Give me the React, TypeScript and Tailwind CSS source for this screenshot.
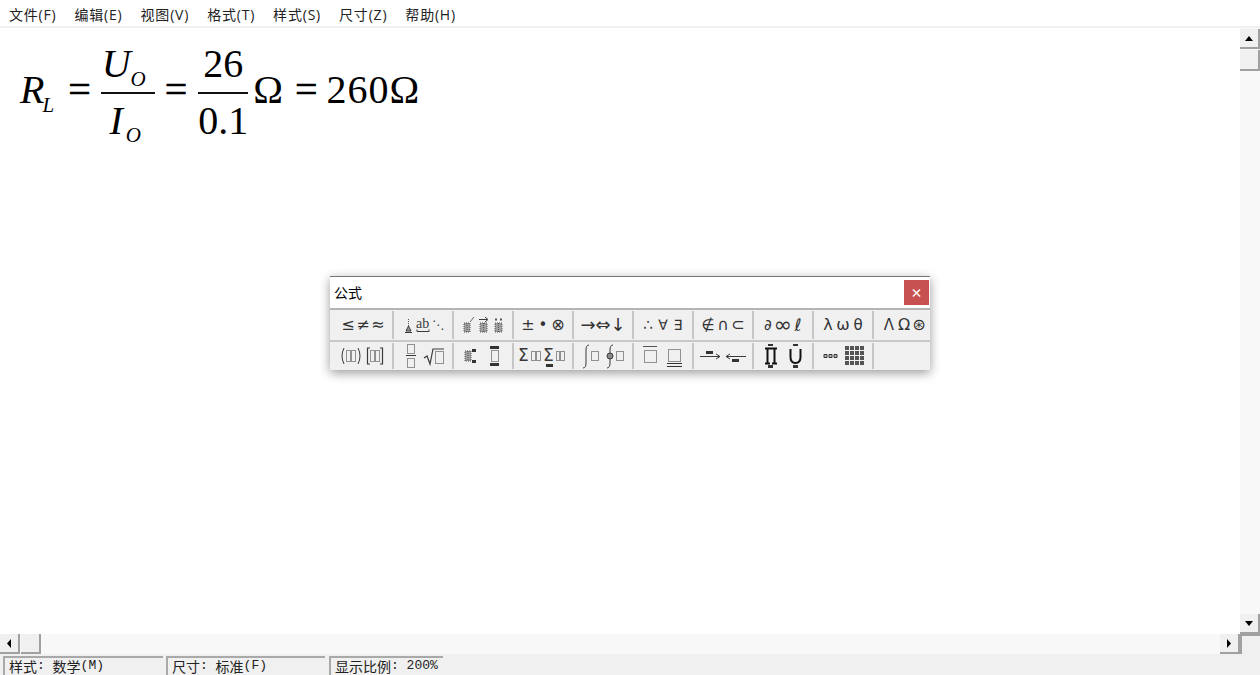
import type { ReactNode } from "react";

const ink = "#3a3a3a";

const menus = ["文件(F)", "编辑(E)", "视图(V)", "格式(T)", "样式(S)", "尺寸(Z)", "帮助(H)"];

// dotted template slot
function Slot({ x, y, w, h }: { x: number; y: number; w: number; h: number }) {
  return (
    <rect x={x + 0.5} y={y + 0.5} width={w} height={h} fill="none" stroke="#333" strokeWidth="1" strokeDasharray="1 1" />
  );
}

function Dense({ x, y, w, h }: { x: number; y: number; w: number; h: number }) {
  return (
    <g>
      <rect x={x} y={y} width={w} height={h} fill="#a0a0a0" />
      <rect x={x} y={y} width={w} height={h} fill="none" stroke="#555" strokeWidth="1" strokeDasharray="1 1" />
      <line x1={x + w / 2} y1={y} x2={x + w / 2} y2={y + h} stroke="#555" strokeWidth="1" strokeDasharray="1 1" />
    </g>
  );
}

function Small({ children }: { children: ReactNode }) {
  return (
    <svg width="15" height="22" viewBox="0 0 15 22" className="shrink-0">
      {children}
    </svg>
  );
}

function Wide({ children }: { children: ReactNode }) {
  return (
    <svg width="24" height="26" viewBox="0 0 24 26" className="shrink-0">
      {children}
    </svg>
  );
}

function Glyph({ children, size = "text-[16px]" }: { children: string; size?: string }) {
  return (
    <span className={`flex h-[22px] w-[15px] shrink-0 items-center justify-center font-['DejaVu_Sans',sans-serif] leading-none text-[#333] ${size}`}>
      {children}
    </span>
  );
}

const topRow: ReactNode[][] = [
  [<Glyph>≤</Glyph>, <Glyph>≠</Glyph>, <Glyph>≈</Glyph>],
  [
    <Small>
      <line x1="7.5" y1="5" x2="7.5" y2="12" stroke="#555" strokeDasharray="1 1" />
      <path d="M5 17 L7.5 12 L10 17 Z" fill="#999" stroke={ink} />
      <line x1="4" y1="18.5" x2="11" y2="18.5" stroke={ink} />
    </Small>,
    <Small>
      <text x="0" y="14" fontFamily="Liberation Serif" fontSize="14" fill={ink}>ab</text>
      <path d="M1 15.5 V17.5 H13 V15.5" fill="none" stroke={ink} />
    </Small>,
    <Glyph size="text-[12px]">⋱</Glyph>,
  ],
  [
    <Small>
      <Dense x={3} y={9} w={6} h={9} />
      <line x1="9" y1="8" x2="13" y2="3" stroke="#666" />
    </Small>,
    <Small>
      <Dense x={4} y={9} w={7} h={9} />
      <path d="M3 5.5 H11 M9 3 L12 5.5 L9 8" fill="none" stroke={ink} />
    </Small>,
    <Small>
      <Dense x={4} y={9} w={7} h={9} />
      <path d="M4 5.5 H6 M9 5.5 H11" stroke="#555" strokeWidth="2" />
    </Small>,
  ],
  [<Glyph>±</Glyph>, <Glyph size="text-[15px]">•</Glyph>, <Glyph>⊗</Glyph>],
  [<Glyph size="text-[18px]">→</Glyph>, <Glyph size="text-[18px]">⇔</Glyph>, <Glyph size="text-[18px]">↓</Glyph>],
  [<Glyph size="text-[15px]">∴</Glyph>, <Glyph size="text-[14px]">∀</Glyph>, <Glyph size="text-[14px]">∃</Glyph>],
  [<Glyph size="text-[15px]">∉</Glyph>, <Glyph size="text-[16px]">∩</Glyph>, <Glyph size="text-[16px]">⊂</Glyph>],
  [<Glyph size="text-[15px]">∂</Glyph>, <Glyph size="text-[22px]">∞</Glyph>, <Glyph size="text-[17px]">ℓ</Glyph>],
  [<Glyph>λ</Glyph>, <Glyph>ω</Glyph>, <Glyph size="text-[15px]">θ</Glyph>],
  [<Glyph size="text-[15px]">Λ</Glyph>, <Glyph size="text-[16px]">Ω</Glyph>, <Glyph size="text-[16px]">⊛</Glyph>],
];

const bottomRow: ReactNode[][] = [
  [
    <Wide>
      <path d="M5 5 Q1 13 5 21 M19 5 Q23 13 19 21" fill="none" stroke={ink} />
      <Slot x={7} y={7} w={4} h={11} />
      <Slot x={12} y={7} w={4} h={11} />
    </Wide>,
    <Wide>
      <path d="M7 5 H4.5 V21 H7 M17 5 H19.5 V21 H17" fill="none" stroke={ink} strokeWidth="1.2" />
      <Slot x={7} y={7} w={4} h={11} />
      <Slot x={12} y={7} w={4} h={11} />
    </Wide>,
  ],
  [
    <Wide>
      <Slot x={8} y={1} w={7} h={9} />
      <line x1="7" y1="12.5" x2="17" y2="12.5" stroke={ink} />
      <Slot x={8} y={15} w={7} h={9} />
    </Wide>,
    <Wide>
      <path d="M1 15 L4 13 L7 21 L10 6 H21" fill="none" stroke={ink} strokeWidth="1.2" />
      <Slot x={12} y={8} w={8} h={12} />
    </Wide>,
  ],
  [
    <Wide>
      <Dense x={6} y={8} w={6} h={10} />
      <rect x="13" y="6" width="4" height="3" fill="#333" />
      <rect x="13" y="17" width="4" height="3" fill="#333" />
    </Wide>,
    <Wide>
      <rect x="7" y="3" width="9" height="3" fill="#333" />
      <Slot x={8} y={7} w={7} h={11} />
      <rect x="7" y="20" width="9" height="3" fill="#333" />
    </Wide>,
  ],
  [
    <Wide>
      <text x="-1" y="18" fontFamily="DejaVu Sans" fontSize="17" fill={ink}>Σ</text>
      <Slot x={12} y={8} w={4} h={9} />
      <Slot x={17} y={8} w={4} h={9} />
    </Wide>,
    <Wide>
      <text x="0" y="18" fontFamily="DejaVu Sans" fontSize="17" fill={ink}>Σ</text>
      <rect x="3" y="21" width="7" height="3" fill="#333" />
      <Slot x={13} y={8} w={3} h={9} />
      <Slot x={17} y={8} w={4} h={9} />
    </Wide>,
  ],
  [
    <Wide>
      <path d="M10 2 Q7 2 7 7 V20 Q7 25 4 25" fill="none" stroke={ink} />
      <Slot x={12} y={8} w={7} h={9} />
    </Wide>,
    <Wide>
      <path d="M10 2 Q7 2 7 7 V20 Q7 25 4 25" fill="none" stroke={ink} />
      <circle cx="7" cy="13" r="3" fill="#888" stroke={ink} />
      <Slot x={13} y={8} w={7} h={9} />
    </Wide>,
  ],
  [
    <Wide>
      <rect x="4" y="3" width="14" height="1" fill="#555" />
      <Slot x={5} y={7} w={12} h={12} />
    </Wide>,
    <Wide>
      <Slot x={5} y={6} w={12} h={12} />
      <rect x="4" y="20" width="15" height="1" fill="#333" />
      <rect x="4" y="23" width="15" height="1" fill="#333" />
    </Wide>,
  ],
  [
    <Wide>
      <rect x="7" y="8" width="7" height="3" fill="#333" />
      <path d="M1 13.5 H20 M17 11 L21 13.5 L17 16" fill="none" stroke={ink} />
    </Wide>,
    <Wide>
      <path d="M4 13.5 H23 M7 11 L3 13.5 L7 16" fill="none" stroke={ink} />
      <rect x="9" y="16" width="7" height="3" fill="#333" />
    </Wide>,
  ],
  [
    <Wide>
      <rect x="9" y="1" width="5" height="2" fill="#333" />
      <path d="M6 5.5 H18 M8.5 5.5 V20 M15.5 5.5 V20 M6 20.5 H11 M13 20.5 H18" fill="none" stroke="#111" strokeWidth="2" />
      <rect x="9" y="22" width="5" height="3" fill="#333" />
    </Wide>,
    <Wide>
      <rect x="10" y="1" width="5" height="2" fill="#333" />
      <path d="M7.5 6 V14 Q7.5 20 12.5 20 Q17.5 20 17.5 14 V6" fill="none" stroke="#111" strokeWidth="2" />
      <rect x="10" y="22" width="5" height="3" fill="#333" />
    </Wide>,
  ],
  [
    <Wide>
      <path d="M5 11.5 H8 V14.5 H5 Z M10 11.5 H13 V14.5 H10 Z M15 11.5 H18 V14.5 H15 Z" fill="#bbb" stroke="#333" />
    </Wide>,
    <Wide>
      {[3, 8, 13, 18].map((y) => [2, 7, 12, 17].map((x) => <rect key={`${x}-${y}`} x={x} y={y} width="4" height="4" fill="#555" />))}
    </Wide>,
  ],
  [],
];

function ToolRow({ groups, height, inner }: { groups: ReactNode[][]; height: string; inner: string }) {
  return (
    <div className={`flex items-center pl-[4px] ${height}`}>
      {groups.map((group, i) => (
        <div
          key={i}
          className={`flex w-[60px] shrink-0 items-center justify-center ${inner} ${i < 9 ? "border-r-2 border-[#c6c6c6]" : ""}`}
        >
          {group.map((item, j) => (
            <span key={j}>{item}</span>
          ))}
        </div>
      ))}
    </div>
  );
}

function ScrollBtn({ dir }: { dir: "up" | "down" | "left" | "right" }) {
  const tri = {
    up: "M1 8 L5 3 L9 8 Z",
    down: "M1 3 L5 8 L9 3 Z",
    left: "M7 1 L3 5.5 L7 10 Z",
    right: "M3 1 L7 5.5 L3 10 Z",
  }[dir];
  return (
    <div className="flex h-[20px] w-[20px] shrink-0 items-center justify-center border-r-2 border-b-2 border-[#a0a0a0] bg-[#f0f0f0]">
      <svg width="10" height="11" viewBox="0 0 10 11">
        <path d={tri} fill="#000" />
      </svg>
    </div>
  );
}

function Thumb({ className }: { className: string }) {
  return <div className={`shrink-0 border-r-2 border-b-2 border-[#a0a0a0] bg-[#f0f0f0] ${className}`} />;
}

function Sub({ children, className }: { children: string; className: string }) {
  return <span className={`text-[21px] leading-[21px] italic ${className}`}>{children}</span>;
}

function Main({ children, className = "" }: { children: string; className?: string }) {
  return <span className={`block text-[40px] leading-[40px] ${className}`}>{children}</span>;
}

function Equals({ className }: { className: string }) {
  return <Main className={`mt-[42px] [-webkit-text-stroke:0.6px_black] ${className}`}>=</Main>;
}

function Fraction({ top, bottom, width }: { top: ReactNode; bottom: ReactNode; width: string }) {
  return (
    <div className={`mt-[16px] flex flex-col items-center ${width}`}>
      <div className="flex h-[48px] items-start">{top}</div>
      <div className="h-[2px] w-full bg-[#111]" />
      <div className="mt-[7px] flex items-start">{bottom}</div>
    </div>
  );
}

function Formula() {
  return (
    <div className="flex items-start pl-[20px] font-['Liberation_Serif',serif] text-black">
      <Main className="mt-[42px] italic">R</Main>
      <Sub className="mt-[67px] -ml-[2px]">L</Sub>
      <Equals className="ml-[14px]" />
      <div className="ml-[10px]">
        <Fraction
          width="w-[54px]"
          top={
            <div className="mr-[8px] flex items-start">
              <Main className="italic">U</Main>
              <Sub className="mt-[25px]">O</Sub>
            </div>
          }
          bottom={
            <div className="mr-[5px] flex items-start">
              <Main className="italic">I</Main>
              <Sub className="mt-[24px] ml-[3px]">O</Sub>
            </div>
          }
        />
      </div>
      <Equals className="ml-[10px]" />
      <div className="ml-[11px]">
        <Fraction width="w-[50px]" top={<Main>26</Main>} bottom={<Main>0.1</Main>} />
      </div>
      <Main className="mt-[42px] ml-[5px]">Ω</Main>
      <Equals className="ml-[12px]" />
      <Main className="mt-[42px] ml-[9px] tracking-[1px]">260Ω</Main>
    </div>
  );
}

function StatusCell({ width, children }: { width: string; children: ReactNode }) {
  return (
    <div className={`flex h-[19px] items-center overflow-hidden border-t-2 border-l-2 border-[#a9a9a9] pb-[2px] pl-[4px] text-[14px] leading-none text-[#222] ${width}`}>
      {children}
    </div>
  );
}

function Mono({ children }: { children: string }) {
  return <span className="font-['Liberation_Mono',monospace] text-[13px] whitespace-pre">{children}</span>;
}

export default function App() {
  return (
    <div className="flex h-[675px] w-[1260px] flex-col overflow-hidden bg-white font-['Noto_Sans_CJK_SC','Open_Sans',sans-serif]">
      {/* menu */}
      <div className="flex h-[28px] shrink-0 items-center gap-[18px] border-b-2 border-[#f0f0f0] pl-[9px] text-[14px] text-[#222]">
        {menus.map((m) => (
          <span key={m} className="pt-[2px] font-['Open_Sans','Noto_Sans_CJK_SC',sans-serif] tracking-[0.8px]">
            {m}
          </span>
        ))}
      </div>

      <div className="flex min-h-0 flex-1">
        <div className="relative min-w-0 flex-1">
          <Formula />

          {/* floating equation toolbar */}
          <div className="absolute top-[248px] left-[330px] w-[600px] border-t border-[#777] bg-[#f0f0f0] shadow-[0_3px_10px_rgba(0,0,0,0.4)]">
            <div className="flex h-[33px] items-center justify-between border-b-2 border-[#b4b4b4] bg-white pl-[4px]">
              <span className="pb-[1px] text-[14px] text-black">公式</span>
              <div className="mr-[1px] flex h-[25px] w-[25px] items-center justify-center bg-[#c75050] text-[12px] leading-none font-bold text-white">
                ×
              </div>
            </div>
            <ToolRow groups={topRow} height="h-[30px]" inner="h-[28px]" />
            <div className="h-[2px] bg-[#c8c8c8]" />
            <ToolRow groups={bottomRow} height="h-[28px]" inner="h-[26px]" />
          </div>
        </div>

        {/* vertical scrollbar */}
        <div className="flex w-[20px] shrink-0 flex-col bg-[#f8f8f8] pt-[1px]">
          <ScrollBtn dir="up" />
          <Thumb className="mt-[1px] h-[21px] w-[20px]" />
          <div className="flex-1" />
          <ScrollBtn dir="down" />
        </div>
      </div>

      {/* horizontal scrollbar */}
      <div className="flex h-[20px] shrink-0 bg-[#f8f8f8]">
        <ScrollBtn dir="left" />
        <Thumb className="ml-[1px] h-[20px] w-[20px]" />
        <div className="flex-1" />
        <ScrollBtn dir="right" />
        <div className="h-[20px] w-[20px] border-t-2 border-l-2 border-[#a0a0a0] bg-[#f0f0f0]" />
      </div>

      {/* status bar */}
      <div className="flex h-[21px] shrink-0 items-end bg-[#f0f0f0] pl-[3px]">
        <StatusCell width="w-[160px] mr-[3px]">
          样式<Mono>: </Mono>
          数学
          <Mono>(M)</Mono>
        </StatusCell>
        <StatusCell width="w-[159px] mr-[4px]">
          尺寸<Mono>: </Mono>
          标准
          <Mono>(F)</Mono>
        </StatusCell>
        <StatusCell width="w-[114px]">
          显示比例<Mono>: 200%</Mono>
        </StatusCell>
      </div>
    </div>
  );
}
